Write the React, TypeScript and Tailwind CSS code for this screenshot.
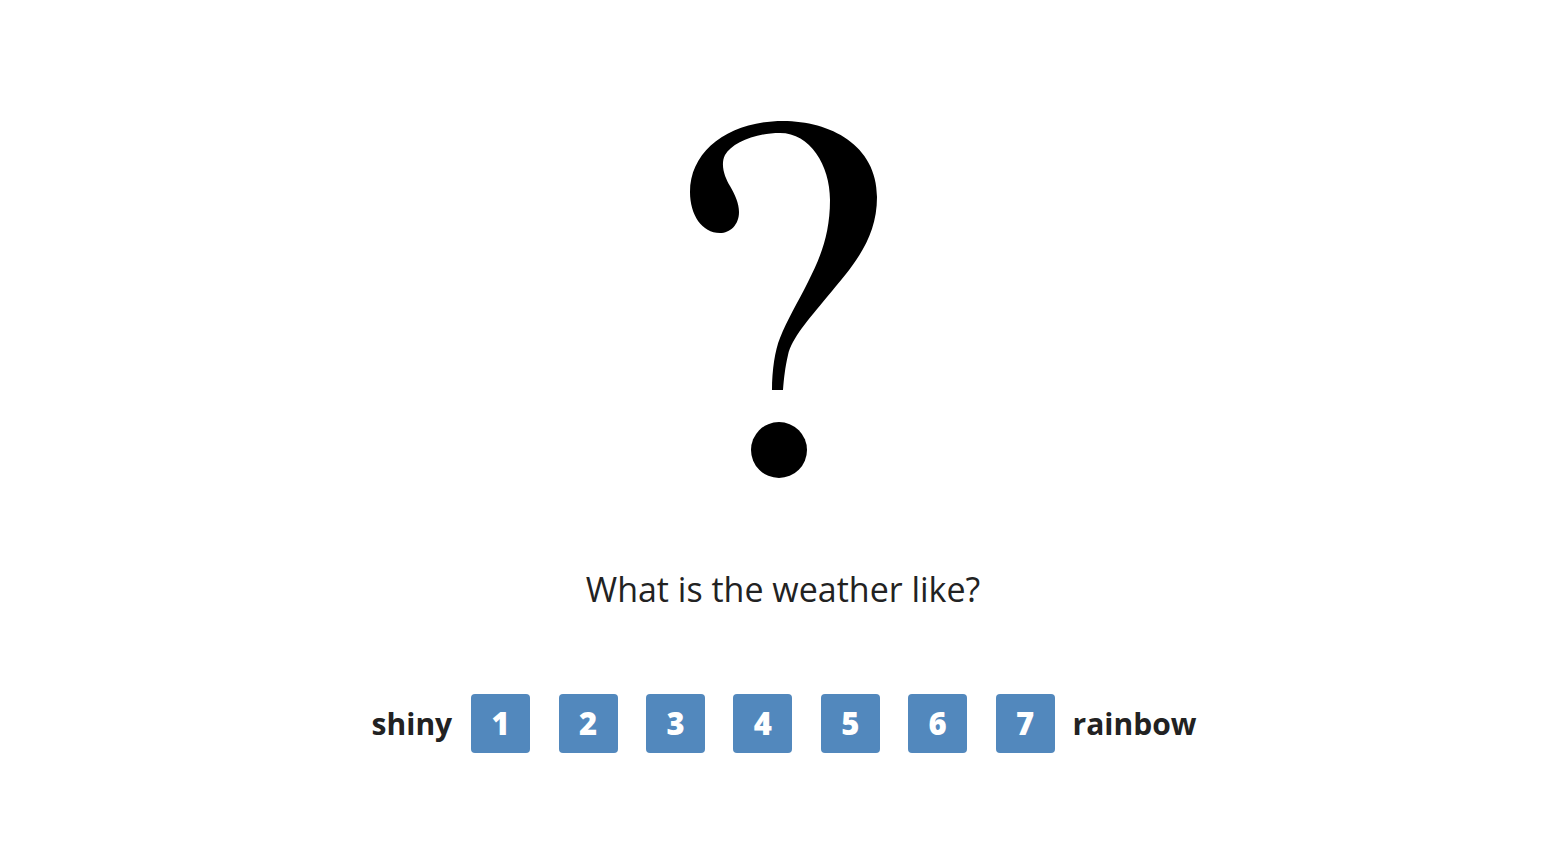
export default function App() {
  const nums = [1, 2, 3, 4, 5, 6, 7];
  return (
    <div className="w-[1566px] h-[858px] bg-white flex flex-col items-center">
      <svg
        className="mt-[110px] ml-[4px]"
        width="210"
        height="380"
        viewBox="0 0 210 380"
        role="img"
        aria-label="question mark"
      >
        <path
          fill="#000"
          d="M 103 11
             C 150 11, 197 35, 197 87
             C 197 130, 172 157, 147 187
             C 128 210, 112 228, 108 245
             C 105 258, 104 268, 103 280
             L 92 280
             C 92 260, 95 240, 100 228
             C 107 210, 118 192, 128 172
             C 140 148, 150 125, 150 90
             C 150 55, 130 23, 100 23
             C 75 23, 52 33, 45 45
             C 40 55, 45 68, 50 76
             C 55 85, 59 93, 59 102
             C 59 115, 50 123, 40 123
             C 22 123, 10 105, 10 82
             C 10 40, 50 11, 103 11 Z"
        />
        <circle cx="99" cy="340" r="28" fill="#000" />
      </svg>
      <p className="mt-[82px] font-['Open_Sans',sans-serif] text-[34px] leading-none text-[#222]">
        What is the weather like?
      </p>
      <div className="mt-[88px] ml-[2px] flex items-center font-['Open_Sans',sans-serif] font-bold text-[30px] text-[#222]">
        <span className="mr-[19px]">shiny</span>
        <div className="flex gap-[28.4px]">
          {nums.map((n) => (
            <button
              key={n}
              className="w-[59px] h-[59px] rounded-[4px] bg-[#5288bd] text-white font-extrabold text-[31px] flex items-center justify-center"
            >
              {n}
            </button>
          ))}
        </div>
        <span className="ml-[18px]">rainbow</span>
      </div>
    </div>
  );
}
